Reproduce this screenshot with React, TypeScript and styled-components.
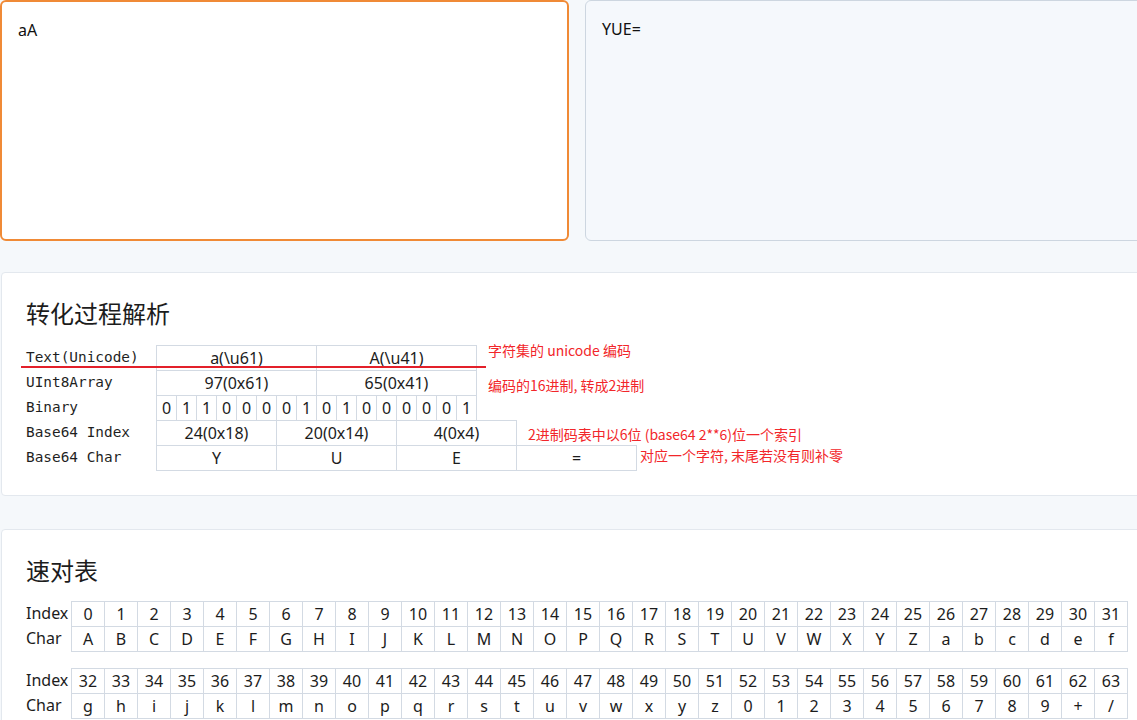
import React from "react";
import styled, { createGlobalStyle } from "styled-components";

const GlobalStyle = createGlobalStyle`
  html, body {
    margin: 0;
    padding: 0;
    background: #f5f8fb;
    overflow: hidden;
  }
  body {
    font-family: "Noto Sans", "Noto Sans CJK SC", sans-serif;
    color: #1f1f1f;
  }
`;

const Page = styled.div`
  width: 1154px;
  display: flex;
  flex-direction: column;
`;

const EditorRow = styled.div`
  display: grid;
  grid-template-columns: 569px 569px;
  column-gap: 16px;
`;

const TextBox = styled.textarea<{ $focused?: boolean }>`
  box-sizing: border-box;
  height: 241px;
  margin: 0;
  resize: none;
  outline: none;
  border-radius: 6px;
  padding: 16px;
  font-family: "Noto Sans", "Noto Sans CJK SC", sans-serif;
  font-size: 16px;
  line-height: 24px;
  color: #111;
  border: ${(p) => (p.$focused ? "2px solid #f08a36" : "1px solid #cdd6e0")};
  background: ${(p) => (p.$focused ? "#ffffff" : "#f5f8fc")};
  overflow: hidden;
`;

const Card = styled.section<{ $top: number }>`
  margin-top: ${(p) => p.$top}px;
  margin-left: 1px;
  background: #ffffff;
  border: 1px solid #e3e8ee;
  border-radius: 4px;
  padding: 24px;
`;

const Title = styled.h2<{ $gap: number }>`
  margin: 0 0 ${(p) => p.$gap}px 0;
  font-family: "Noto Sans CJK SC", sans-serif;
  font-size: 24px;
  font-weight: 400;
  line-height: 32px;
  color: #1c1c1c;
`;

const Process = styled.div`
  position: relative;
  display: flex;
  flex-direction: column;
`;

const PRow = styled.div`
  display: flex;
  align-items: flex-start;
  height: 26px;
  & + & {
    margin-top: -1px;
  }
`;

const PLabel = styled.div`
  width: 130px;
  flex: none;
  height: 26px;
  line-height: 24px;
  font-family: "DejaVu Sans Mono", monospace;
  font-size: 14.4px;
  color: #1f1f1f;
  white-space: pre;
`;

const PCell = styled.div<{ $bits: number }>`
  box-sizing: border-box;
  flex: none;
  width: ${(p) => p.$bits * 20 + 1}px;
  height: 26px;
  border: 1px solid #d3dae3;
  text-align: center;
  font-size: 16px;
  line-height: 24px;
  color: #1c1c1c;
  & + & {
    margin-left: -1px;
  }
`;

const Note = styled.span<{ $dx: number; $dy: number }>`
  margin-left: ${(p) => p.$dx}px;
  margin-top: ${(p) => p.$dy}px;
  font-family: "Noto Sans CJK SC", sans-serif;
  font-size: 14px;
  line-height: 16px;
  color: #f2262a;
  white-space: nowrap;
`;

const Underline = styled.div`
  position: absolute;
  left: -5px;
  top: 21px;
  width: 465px;
  height: 2px;
  background: #e3202a;
`;

const LookupBlock = styled.div`
  display: flex;
  flex-direction: column;
  gap: 16px;
`;

const LookupTable = styled.div`
  display: flex;
  flex-direction: column;
`;

const LRow = styled.div`
  display: flex;
  height: 26px;
  & + & {
    margin-top: -1px;
  }
`;

const LLabel = styled.div`
  width: 45px;
  flex: none;
  font-size: 16px;
  line-height: 24px;
  color: #1c1c1c;
`;

const LCell = styled.div`
  box-sizing: border-box;
  flex: none;
  width: 34px;
  height: 26px;
  border: 1px solid #d3dae3;
  text-align: center;
  font-size: 16px;
  line-height: 25px;
  color: #1c1c1c;
  & + & {
    margin-left: -1px;
  }
`;

const CHARS = "ABCDEFGHIJKLMNOPQRSTUVWXYZabcdefghijklmnopqrstuvwxyz0123456789+/";
const BITS = "0110000101000001".split("");

function Lookup({ start }: { start: number }) {
  const idx = Array.from({ length: 32 }, (_, i) => start + i);
  return (
    <LookupTable>
      <LRow>
        <LLabel>Index</LLabel>
        {idx.map((i) => (
          <LCell key={i}>{i}</LCell>
        ))}
      </LRow>
      <LRow>
        <LLabel>Char</LLabel>
        {idx.map((i) => (
          <LCell key={i}>{CHARS[i]}</LCell>
        ))}
      </LRow>
    </LookupTable>
  );
}

export default function App() {
  return (
    <>
      <GlobalStyle />
      <Page>
        <EditorRow>
          <TextBox $focused defaultValue="aA" />
          <TextBox readOnly defaultValue="YUE=" />
        </EditorRow>

        <Card $top={31}>
          <Title $gap={16}>转化过程解析</Title>
          <Process>
            <PRow>
              <PLabel>Text(Unicode)</PLabel>
              <PCell $bits={8}>a(\u61)</PCell>
              <PCell $bits={8}>A(\u41)</PCell>
              <Note $dx={11} $dy={-3}>字符集的 unicode 编码</Note>
            </PRow>
            <PRow>
              <PLabel>UInt8Array</PLabel>
              <PCell $bits={8}>97(0x61)</PCell>
              <PCell $bits={8}>65(0x41)</PCell>
              <Note $dx={11} $dy={7}>编码的16进制, 转成2进制</Note>
            </PRow>
            <PRow>
              <PLabel>Binary</PLabel>
              {BITS.map((b, i) => (
                <PCell key={i} $bits={1}>
                  {b}
                </PCell>
              ))}
            </PRow>
            <PRow>
              <PLabel>Base64 Index</PLabel>
              <PCell $bits={6}>24(0x18)</PCell>
              <PCell $bits={6}>20(0x14)</PCell>
              <PCell $bits={6}>4(0x4)</PCell>
              <Note $dx={11} $dy={6}>2进制码表中以6位 (base64 2**6)位一个索引</Note>
            </PRow>
            <PRow>
              <PLabel>Base64 Char</PLabel>
              <PCell $bits={6}>Y</PCell>
              <PCell $bits={6}>U</PCell>
              <PCell $bits={6}>E</PCell>
              <PCell $bits={6}>=</PCell>
              <Note $dx={3} $dy={2}>对应一个字符, 末尾若没有则补零</Note>
            </PRow>
            <Underline />
          </Process>
        </Card>

        <Card $top={33}>
          <Title $gap={15}>速对表</Title>
          <LookupBlock>
            <Lookup start={0} />
            <Lookup start={32} />
          </LookupBlock>
        </Card>
      </Page>
    </>
  );
}
